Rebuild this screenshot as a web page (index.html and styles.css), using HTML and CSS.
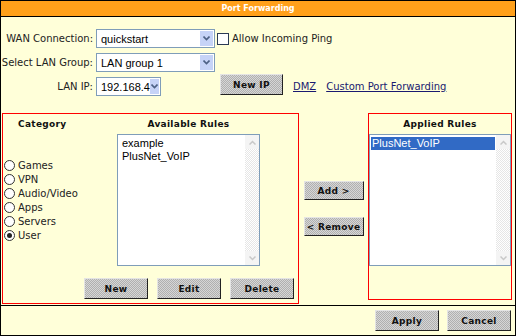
FILE: index.html
```html
<!DOCTYPE html>
<html lang="en">
<head>
  <meta charset="UTF-8">
  <title>Port Forwarding</title>
  <link rel="stylesheet" href="styles.css">
</head>
<body>
  <div class="window">
    <div class="title">Port Forwarding</div>

    <!-- WAN / LAN settings -->
    <div class="form">
      <label class="label">WAN Connection:</label>
      <div class="field">
        <div class="select wide">
          <span>quickstart</span>
          <span class="arrow"><svg width="7" height="5" viewBox="0 0 7 5"><path d="M0.5 0.5 L3.5 3.5 L6.5 0.5" fill="none" stroke="#4d6185" stroke-width="1.6"/></svg></span>
        </div>
        <span class="checkbox"></span>
        <span class="check-label">Allow Incoming Ping</span>
      </div>

      <label class="label">Select LAN Group:</label>
      <div class="field">
        <div class="select wide">
          <span>LAN group 1</span>
          <span class="arrow"><svg width="7" height="5" viewBox="0 0 7 5"><path d="M0.5 0.5 L3.5 3.5 L6.5 0.5" fill="none" stroke="#4d6185" stroke-width="1.6"/></svg></span>
        </div>
      </div>

      <label class="label">LAN IP:</label>
      <div class="field">
        <div class="select narrow">
          <span>192.168.4</span>
          <span class="arrow"><svg width="7" height="5" viewBox="0 0 7 5"><path d="M0.5 0.5 L3.5 3.5 L6.5 0.5" fill="none" stroke="#4d6185" stroke-width="1.6"/></svg></span>
        </div>
        <button class="btn new-ip">New IP</button>
        <a class="link" href="#">DMZ</a>
        <a class="link" href="#">Custom Port Forwarding</a>
      </div>
    </div>

    <!-- Rules -->
    <div class="panels">
      <div class="panel left">
        <div class="panel-grid">
          <div class="heading cat-heading">Category</div>
          <div class="heading">Available Rules</div>
          <div class="categories">
            <div class="radio-row"><span class="radio"></span>Games</div>
            <div class="radio-row"><span class="radio"></span>VPN</div>
            <div class="radio-row"><span class="radio"></span>Audio/Video</div>
            <div class="radio-row"><span class="radio"></span>Apps</div>
            <div class="radio-row"><span class="radio"></span>Servers</div>
            <div class="radio-row"><span class="radio checked"></span>User</div>
          </div>
          <div class="listbox">
            <div class="items">
              <div class="item">example</div>
              <div class="item">PlusNet_VoIP</div>
            </div>
            <div class="scroll">
              <span class="scroll-btn"><svg width="7" height="5" viewBox="0 0 7 5"><path d="M0.5 4.5 L3.5 1.5 L6.5 4.5" fill="none" stroke="#c8c8c8" stroke-width="1.5"/></svg></span>
              <span class="scroll-btn"><svg width="7" height="5" viewBox="0 0 7 5"><path d="M0.5 0.5 L3.5 3.5 L6.5 0.5" fill="none" stroke="#c8c8c8" stroke-width="1.5"/></svg></span>
            </div>
          </div>
        </div>
        <div class="actions">
          <button class="btn">New</button>
          <button class="btn">Edit</button>
          <button class="btn">Delete</button>
        </div>
      </div>

      <div class="middle">
        <button class="btn move">Add &gt;</button>
        <button class="btn move">&lt; Remove</button>
      </div>

      <div class="panel right">
        <div class="heading">Applied Rules</div>
        <div class="listbox applied">
          <div class="items">
            <div class="item selected">PlusNet_VoIP</div>
          </div>
          <div class="scroll">
            <span class="scroll-btn"><svg width="7" height="5" viewBox="0 0 7 5"><path d="M0.5 4.5 L3.5 1.5 L6.5 4.5" fill="none" stroke="#c8c8c8" stroke-width="1.5"/></svg></span>
            <span class="scroll-btn"><svg width="7" height="5" viewBox="0 0 7 5"><path d="M0.5 0.5 L3.5 3.5 L6.5 0.5" fill="none" stroke="#c8c8c8" stroke-width="1.5"/></svg></span>
          </div>
        </div>
      </div>
    </div>

    <div class="footer">
      <button class="btn">Apply</button>
      <button class="btn">Cancel</button>
    </div>
  </div>
</body>
</html>
```

FILE: styles.css
```css
/* Base */
body {
  margin: 0;
  font-family: "DejaVu Sans", Verdana, sans-serif;
  font-size: 10px;
  color: #222;
}

.window {
  width: 516px;
  height: 336px;
  box-sizing: border-box;
  border: 1px solid #000;
  background: #ffffd9;
  display: flex;
  flex-direction: column;
}

.title {
  height: 15px;
  line-height: 16px;
  border-bottom: 1px solid #000;
  background: #ffa01a;
  color: #fff;
  font-weight: bold;
  font-size: 8px;
  text-align: center;
}

/* Top form */
.form {
  display: grid;
  grid-template-columns: 92px auto;
  column-gap: 3px;
  row-gap: 5px;
  padding-top: 12px;
}

.label {
  text-align: right;
  line-height: 19px;
  white-space: nowrap;
}

.field {
  display: flex;
  align-items: center;
  height: 19px;
}

.select {
  box-sizing: border-box;
  height: 19px;
  border: 1px solid #7f9db9;
  background: #fff;
  display: flex;
  align-items: center;
  justify-content: space-between;
  padding: 1px 1px 1px 4px;
  font-family: "Liberation Sans", Arial, sans-serif;
  font-size: 11px;
  color: #000;
}

.select.wide {
  width: 119px;
}

.select.narrow {
  width: 65px;
}

.arrow {
  width: 13px;
  height: 15px;
  background: #c6d3f7;
  display: flex;
  align-items: center;
  justify-content: center;
}

.checkbox {
  width: 10px;
  height: 10px;
  margin-left: 2px;
  border: 1px solid #2b3a55;
  background: #fff;
}

.check-label {
  margin-left: 3px;
}

.link {
  color: #1a1a70;
  margin-left: 10px;
}

/* Buttons */
.btn {
  box-sizing: border-box;
  width: 64px;
  height: 21px;
  padding: 0;
  border: 1px solid;
  border-color: #e4e4e4 #222 #222 #e4e4e4;
  background: repeating-conic-gradient(#b0b0b0 0 25%, #d6d6d6 0 50%) 0 0 / 2px 2px;
  font-family: "DejaVu Sans", Verdana, sans-serif;
  font-size: 9px;
  font-weight: bold;
  color: #111;
  letter-spacing: 0.3px;
}

.new-ip {
  width: 63px;
  margin-left: 59px;
  align-self: flex-start;
  margin-top: -3px;
}

/* Panels */
.panels {
  display: flex;
  margin-top: 17px;
  padding-left: 1px;
}

.panel {
  box-sizing: border-box;
  border: 1px solid #f00;
}

.panel.left {
  width: 297px;
  height: 191px;
  padding: 4px 4px 4px 0;
}

.panel.right {
  width: 144px;
  height: 187px;
  padding-top: 4px;
}

.panel-grid {
  display: grid;
  grid-template-columns: 114px 143px;
  row-gap: 4px;
}

.heading {
  font-size: 9px;
  font-weight: bold;
  line-height: 12px;
  text-align: center;
  letter-spacing: 0.3px;
  color: #111;
}

.cat-heading {
  text-align: left;
  padding-left: 15px;
}

.categories {
  padding-top: 24px;
  padding-left: 1px;
}

.radio-row {
  display: flex;
  align-items: center;
  height: 14px;
  gap: 3px;
}

.radio {
  box-sizing: border-box;
  width: 11px;
  height: 11px;
  border: 1px solid #333;
  border-radius: 50%;
  background: #fff;
  display: flex;
  align-items: center;
  justify-content: center;
}

.radio.checked::after {
  content: "";
  width: 5px;
  height: 5px;
  border-radius: 50%;
  background: #222;
}

.listbox {
  box-sizing: border-box;
  height: 132px;
  border: 1px solid #7f9db9;
  background: #fff;
  display: flex;
}

.listbox.applied {
  margin-top: 4px;
}

.items {
  flex: 1;
  padding: 2px 1px;
  font-family: "Liberation Sans", Arial, sans-serif;
  font-size: 11px;
  color: #000;
}

.item {
  height: 13px;
  line-height: 13px;
  padding-left: 3px;
}

.item.selected {
  background: #316ac5;
  color: #fff;
  padding-left: 1px;
}

.scroll {
  width: 14px;
  background: repeating-conic-gradient(#e6e6e6 0 25%, #fff 0 50%) 0 0 / 2px 2px;
  display: flex;
  flex-direction: column;
  justify-content: space-between;
}

.scroll-btn {
  height: 14px;
  display: flex;
  align-items: center;
  justify-content: center;
  background: #f4f4f4;
}

.actions {
  display: flex;
  justify-content: flex-end;
  gap: 9px;
  margin-top: 12px;
}

.middle {
  width: 69px;
  display: flex;
  flex-direction: column;
  align-items: center;
  gap: 17px;
  padding-top: 68px;
}

.btn.move {
  width: 60px;
  height: 19px;
}

/* Footer */
.footer {
  margin-top: 1px;
  border-top: 1px solid #000;
  display: flex;
  justify-content: flex-end;
  gap: 8px;
  padding: 4px 4px 0 0;
}
```
